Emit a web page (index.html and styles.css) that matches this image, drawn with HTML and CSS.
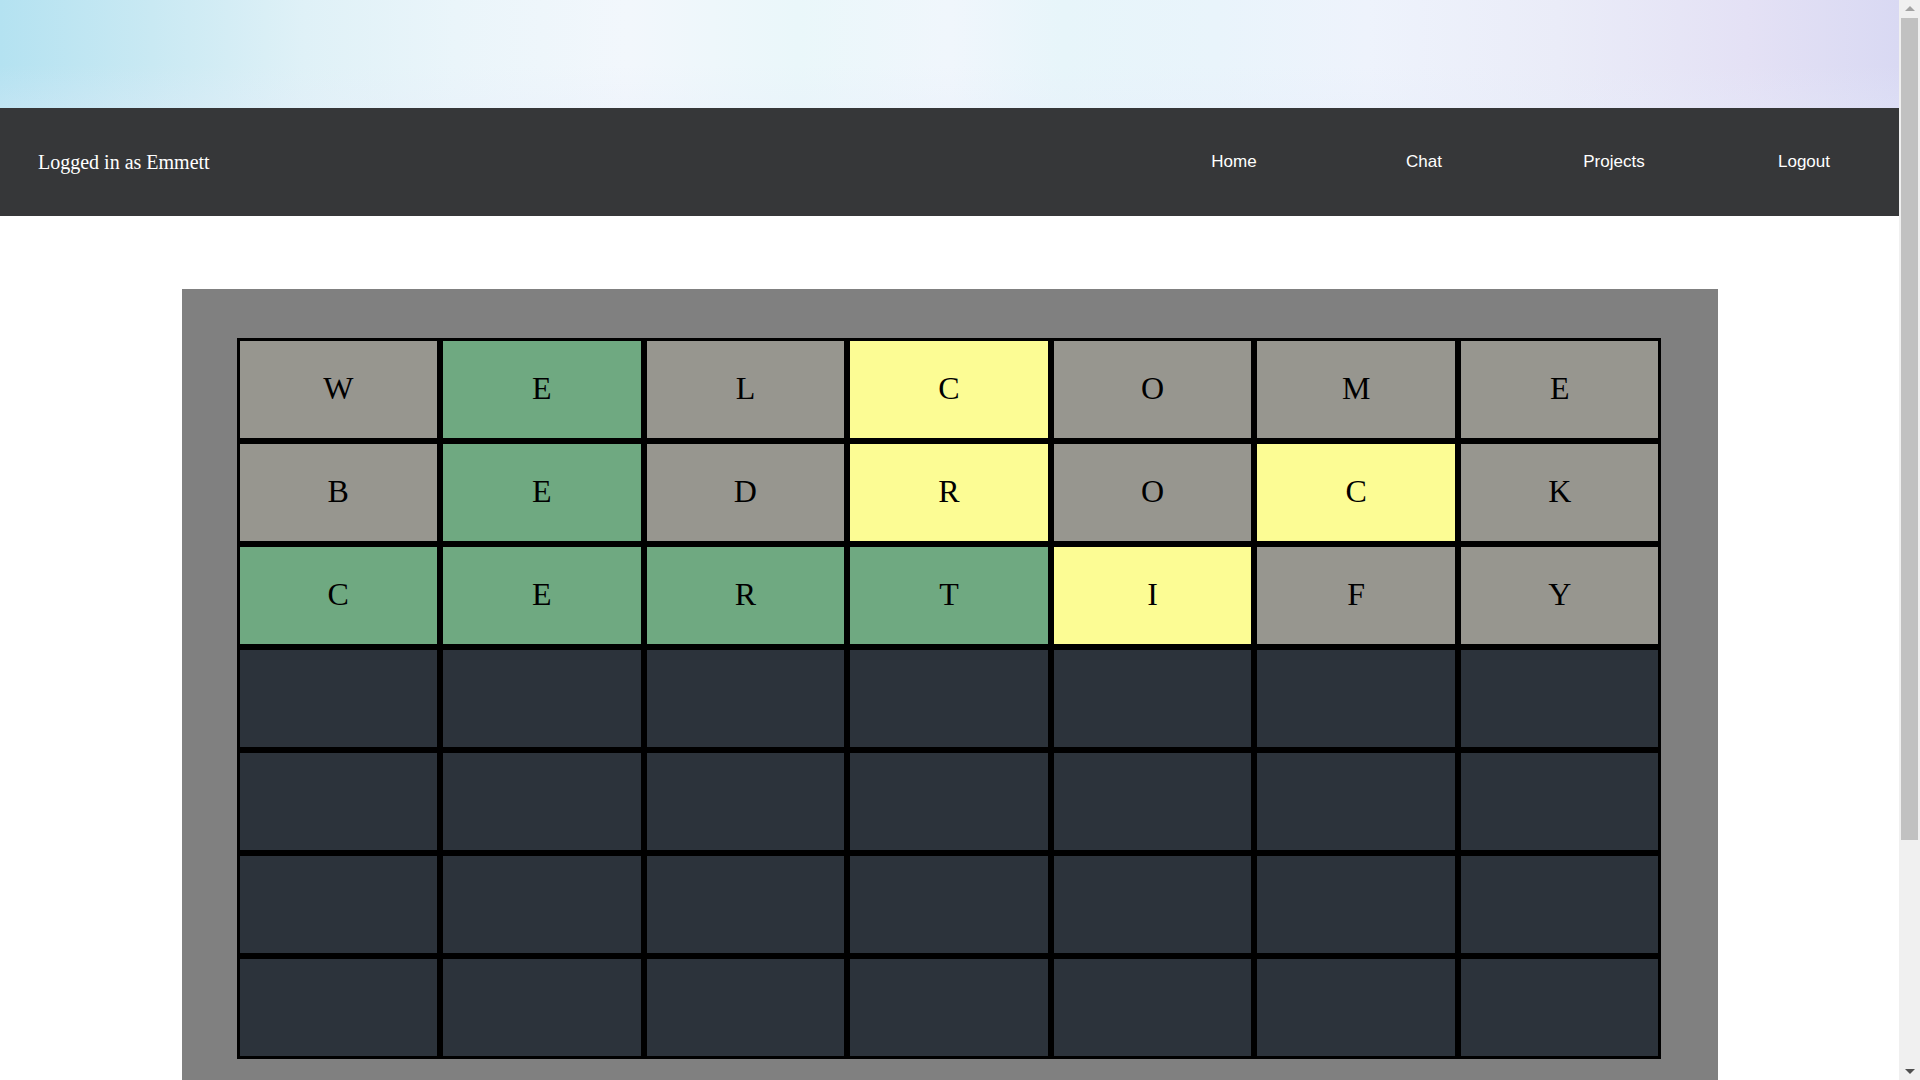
FILE: index.html
```html
<!DOCTYPE html>
<html lang="en">
<head>
<meta charset="utf-8">
<title>Wordle</title>
<link rel="stylesheet" href="styles.css">
</head>
<body>
<header class="hero"></header>
<nav class="navbar">
  <span class="user">Logged in as Emmett</span>
  <ul class="links">
    <li><a href="#">Home</a></li>
    <li><a href="#">Chat</a></li>
    <li><a href="#">Projects</a></li>
    <li><a href="#">Logout</a></li>
  </ul>
</nav>
<main class="main">
  <section class="board-wrap">
    <div class="board">
      <div class="cell gray">W</div><div class="cell green">E</div><div class="cell gray">L</div><div class="cell yellow">C</div><div class="cell gray">O</div><div class="cell gray">M</div><div class="cell gray">E</div>
      <div class="cell gray">B</div><div class="cell green">E</div><div class="cell gray">D</div><div class="cell yellow">R</div><div class="cell gray">O</div><div class="cell yellow">C</div><div class="cell gray">K</div>
      <div class="cell green">C</div><div class="cell green">E</div><div class="cell green">R</div><div class="cell green">T</div><div class="cell yellow">I</div><div class="cell gray">F</div><div class="cell gray">Y</div>
      <div class="cell"></div><div class="cell"></div><div class="cell"></div><div class="cell"></div><div class="cell"></div><div class="cell"></div><div class="cell"></div>
      <div class="cell"></div><div class="cell"></div><div class="cell"></div><div class="cell"></div><div class="cell"></div><div class="cell"></div><div class="cell"></div>
      <div class="cell"></div><div class="cell"></div><div class="cell"></div><div class="cell"></div><div class="cell"></div><div class="cell"></div><div class="cell"></div>
      <div class="cell"></div><div class="cell"></div><div class="cell"></div><div class="cell"></div><div class="cell"></div><div class="cell"></div><div class="cell"></div>
    </div>
  </section>
</main>
<div class="scrollbar" aria-hidden="true">
  <div class="sb-btn"><span class="arrow-up"></span></div>
  <div class="sb-track"><div class="sb-thumb"></div></div>
  <div class="sb-btn"><span class="arrow-down"></span></div>
</div>
</body>
</html>
```
FILE: styles.css
```css
html, body {
  margin: 0;
  padding: 0;
}
html {
  scrollbar-width: none;
}
body {
  background: #ffffff;
  font-family: "Liberation Serif", "Times New Roman", serif;
  margin-right: 21px;
}
.hero {
  height: 108px;
  background:
    linear-gradient(180deg, rgba(255,255,255,0.0) 0%, rgba(255,255,255,0.0) 60%, rgba(230,236,250,0.25) 100%),
    linear-gradient(90deg,
      #b4e2f1 0%,
      #c9e9f3 8%,
      #dff1f7 16%,
      #eaf5fa 24%,
      #f2f7fc 33%,
      #eaf7fa 42%,
      #f0f6fc 50%,
      #e7f5fa 56%,
      #e9f4fb 64%,
      #eef3fc 72%,
      #eaecf8 82%,
      #e4e1f5 92%,
      #d9d9f3 100%);
}
.navbar {
  height: 108px;
  background: #363739;
  display: flex;
  align-items: center;
  justify-content: space-between;
  padding: 0 0 0 38px;
}
.user {
  color: #ffffff;
  font-size: 20px;
  font-family: "Liberation Serif", "Times New Roman", serif;
}
.links {
  list-style: none;
  display: flex;
  margin: 0;
  padding: 0;
}
.links li {
  width: 190px;
  text-align: center;
}
.links a {
  color: #ffffff;
  text-decoration: none;
  font-family: "Liberation Sans", Arial, sans-serif;
  font-size: 17px;
}
.main {
  padding-top: 73px;
  padding-bottom: 8px;
}
.board-wrap {
  width: 1536px;
  box-sizing: border-box;
  margin: 0 auto;
  padding: 49px 56px 49px 55px;
  min-height: 1077px;
  background: #808080;
}
.board {
  display: grid;
  grid-template-columns: repeat(7, 1fr);
  grid-auto-rows: 103px;
}
.cell {
  box-sizing: border-box;
  border: 3px solid #000000;
  background: #2c333b;
  display: flex;
  align-items: center;
  justify-content: center;
  padding-bottom: 2px;
  font-family: "Liberation Serif", "Times New Roman", serif;
  font-size: 32px;
  color: #000000;
}
.cell.gray { background: #97968f; }
.cell.green { background: #6fa981; }
.cell.yellow { background: #fcfc94; }

/* window scrollbar drawn over the right edge */
.scrollbar {
  position: fixed;
  top: 0;
  right: 0;
  width: 21px;
  height: 100vh;
  background: #f0f0f0;
  display: flex;
  flex-direction: column;
}
.sb-btn {
  height: 17px;
  display: flex;
  align-items: center;
  justify-content: center;
}
.arrow-up {
  width: 0;
  height: 0;
  border-left: 5px solid transparent;
  border-right: 5px solid transparent;
  border-bottom: 5px solid #a3a3a3;
}
.arrow-down {
  width: 0;
  height: 0;
  border-left: 5px solid transparent;
  border-right: 5px solid transparent;
  border-top: 5px solid #505050;
}
.sb-track {
  flex: 1;
  padding: 1px 2px 0;
}
.sb-thumb {
  height: 822px;
  background: #c1c1c1;
}
```
